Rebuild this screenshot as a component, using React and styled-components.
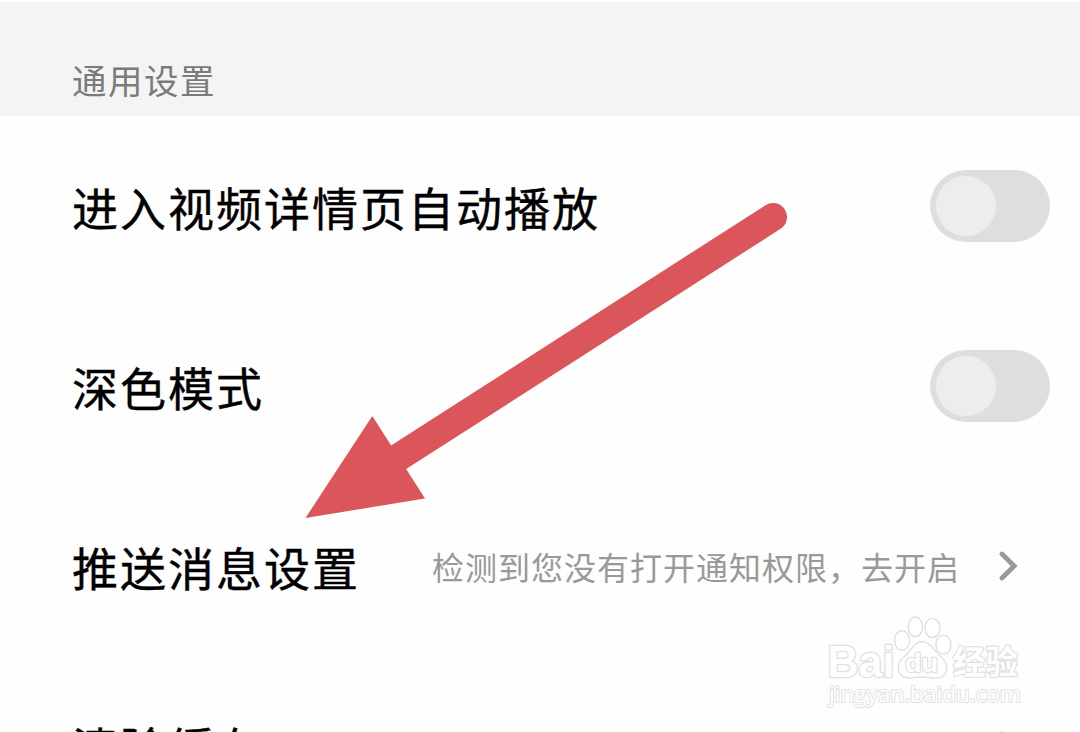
import React from 'react';
import styled, { createGlobalStyle } from 'styled-components';

const GlobalStyle = createGlobalStyle`
  * { box-sizing: border-box; }
  html, body { margin: 0; padding: 0; background: #fff; overflow: hidden; }
`;

const Screen = styled.main`
  position: relative;
  width: 1080px;
  height: 732px;
  overflow: hidden;
  padding-top: 2px;
  background: #fefefe;
  font-family: 'Noto Sans CJK SC', sans-serif;
`;

const SectionHeader = styled.header`
  height: 114px;
  padding: 50px 72px 0;
  background: #f4f4f4;
  color: #7b7b7b;
  font-size: 34.5px;
  letter-spacing: 1.5px;
  line-height: 54px;
`;

const Row = styled.section`
  display: flex;
  align-items: center;
  height: 180px;
  padding-left: 72px;
  padding-right: ${({ $link }) => ($link ? 62 : 30)}px;
`;

const Title = styled.span`
  flex: 1;
  color: #000;
  font-size: 46px;
  letter-spacing: 2px;
  line-height: 72px;
  white-space: nowrap;
  -webkit-text-stroke: 0.4px #000;
`;

const Hint = styled.span`
  margin-right: 39px;
  color: #999;
  font-size: 32px;
  letter-spacing: 1px;
  line-height: 50px;
  white-space: nowrap;
`;

const Switch = styled.button`
  display: flex;
  align-items: center;
  width: 120px;
  height: 72px;
  padding: 6px;
  border: 0;
  border-radius: 36px;
  background: #dedede;
`;

const Knob = styled.span`
  width: 60px;
  height: 60px;
  border-radius: 50%;
  background: #ededed;
`;

const ChevronIcon = styled.svg`
  width: 19px;
  height: 30px;
  flex: none;
`;

const Pointer = styled.svg`
  position: absolute;
  left: 300px;
  top: 195px;
  width: 500px;
  height: 330px;
`;

const Watermark = styled.svg`
  position: absolute;
  left: 820px;
  top: 608px;
  width: 210px;
  height: 104px;

  text {
    paint-order: stroke;
    stroke-linejoin: round;
  }
`;

const Chevron = () => (
  <ChevronIcon viewBox="0 0 19 30">
    <path d="M3 3L15.2 15L3 27" fill="none" stroke="#999" strokeWidth="4.8" strokeLinecap="round" strokeLinejoin="miter" />
  </ChevronIcon>
);

const Toggle = ({ label }) => (
  <Switch role="switch" aria-checked="false" aria-label={label}>
    <Knob />
  </Switch>
);

export default function App() {
  return (
    <>
      <GlobalStyle />
      <Screen>
        <SectionHeader>通用设置</SectionHeader>
        <Row>
          <Title>进入视频详情页自动播放</Title>
          <Toggle label="进入视频详情页自动播放" />
        </Row>
        <Row>
          <Title>深色模式</Title>
          <Toggle label="深色模式" />
        </Row>
        <Row $link>
          <Title>推送消息设置</Title>
          <Hint>检测到您没有打开通知权限，去开启</Hint>
          <Chevron />
        </Row>
        <Row $link>
          <Title>清除缓存</Title>
          <Chevron />
        </Row>
        <Pointer viewBox="300 195 500 330">
          <path d="M399 457L773 217" stroke="#db565b" strokeWidth="28" strokeLinecap="round" />
          <path d="M305.5 518L372.3 416L425 498.5Z" fill="#db565b" />
        </Pointer>
        <Watermark viewBox="820 608 210 104" fill="#fff" stroke="#e0e0e0" strokeWidth="1.4">
          <ellipse cx="902" cy="640.5" rx="7.5" ry="9.7" />
          <ellipse cx="915.5" cy="626.8" rx="7.2" ry="9.8" />
          <ellipse cx="932.5" cy="628" rx="7.6" ry="9.6" />
          <ellipse cx="943.5" cy="644.7" rx="7.6" ry="9.4" />
          <path d="M922 641.5C914 642 911 651 904 657C897 662 896 674 904 677C910 679.5 915 677 922 677C929 677 933 679.5 940 677.5C948 675 949 664 942 658C934 651 931 642 922 641.5Z" />
          <text x="827.5" y="676.5" fontFamily="'Liberation Sans'" fontWeight="700" fontSize="44" strokeWidth="2.6" textLength="67" lengthAdjust="spacingAndGlyphs">Bai</text>
          <text x="905" y="672" fontFamily="'Liberation Sans'" fontWeight="700" fontSize="26" strokeWidth="2.4" textLength="33" lengthAdjust="spacingAndGlyphs">du</text>
          <text x="953" y="673.5" fontFamily="'Noto Sans CJK SC'" fontWeight="700" fontSize="33" strokeWidth="2.4" textLength="65" lengthAdjust="spacingAndGlyphs">经验</text>
          <text x="829" y="702" fontFamily="'Open Sans'" fontSize="22.5" strokeWidth="2.2" stroke="#e4e4e4" textLength="192" lengthAdjust="spacingAndGlyphs">jingyan.baidu.com</text>
        </Watermark>
      </Screen>
    </>
  );
}
